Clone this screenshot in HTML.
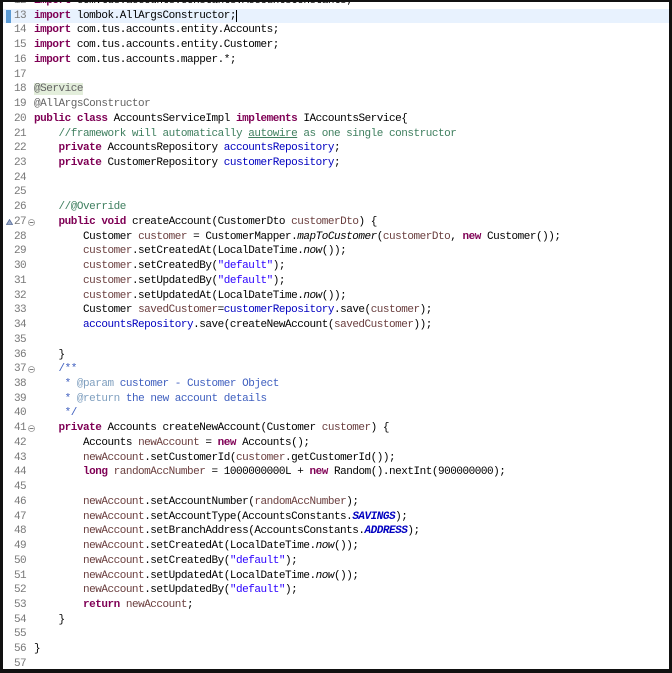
<!DOCTYPE html>
<html><head><meta charset="utf-8">
<style>
html,body{margin:0;padding:0;background:#fff;}
body{width:672px;height:673px;position:relative;overflow:hidden;}
.frame{position:absolute;left:0;top:0;width:666px;height:667px;border-left:3px solid #111;border-top:2px solid #111;border-right:3px solid #111;border-bottom:4px solid #111;overflow:hidden;background:#fff;}
.code{position:absolute;left:0;top:0;width:100%;font-family:"Liberation Mono",monospace;font-size:11px;letter-spacing:-0.48px;}
.l{position:absolute;left:0;width:100%;height:14.73px;line-height:14.73px;white-space:pre;}
.n{position:absolute;left:11px;color:#787878;width:20px;letter-spacing:-0.6px;}
.t{position:absolute;left:31px;color:#000;}
.hl{background:#e8f2fe;}
.k{color:#7f0055;font-weight:bold;}
.f{color:#0000c0;}
.s{color:#2a00ff;}
.c{color:#3f7f5f;}
.a{color:#646464;}
.j{color:#3f5fbf;}
.jt{color:#7f9fbf;}
.v{color:#6a3e3e;}
.i{font-style:italic;}
.fi{color:#0000c0;font-style:italic;font-weight:bold;}
.fold{position:absolute;left:25px;top:4px;}
</style></head><body>
<div class="frame"><div class="code" id="c">
<div class="l"><span class="n">12</span><span class="t"><span class="k">import</span> com.tus.accounts.constants.AccountsConstants;</span></div>
<div class="l hl"><span style="position:absolute;left:3px;top:1px;width:5px;height:13px;background:#5b9bd5"></span><span class="n">13</span><span class="t"><span class="k">import</span> lombok.AllArgsConstructor;<span style="border-left:1px solid #000"> </span></span></div>
<div class="l"><span class="n">14</span><span class="t"><span class="k">import</span> com.tus.accounts.entity.Accounts;</span></div>
<div class="l"><span class="n">15</span><span class="t"><span class="k">import</span> com.tus.accounts.entity.Customer;</span></div>
<div class="l"><span class="n">16</span><span class="t"><span class="k">import</span> com.tus.accounts.mapper.*;</span></div>
<div class="l"><span class="n">17</span></div>
<div class="l"><span class="n">18</span><span class="t"><span class="a" style="background:#e3eedb">@Service</span></span></div>
<div class="l"><span class="n">19</span><span class="t"><span class="a">@AllArgsConstructor</span></span></div>
<div class="l"><span class="n">20</span><span class="t"><span class="k">public</span> <span class="k">class</span> AccountsServiceImpl <span class="k">implements</span> IAccountsService{</span></div>
<div class="l"><span class="n">21</span><span class="t">    <span class="c">//framework will automatically <u>autowire</u> as one single constructor</span></span></div>
<div class="l"><span class="n">22</span><span class="t">    <span class="k">private</span> AccountsRepository <span class="f">accountsRepository</span>;</span></div>
<div class="l"><span class="n">23</span><span class="t">    <span class="k">private</span> CustomerRepository <span class="f">customerRepository</span>;</span></div>
<div class="l"><span class="n">24</span></div>
<div class="l"><span class="n">25</span></div>
<div class="l"><span class="n">26</span><span class="t">    <span class="c">//@Override</span></span></div>
<div class="l"><svg style="position:absolute;left:3px;top:4px" width="7" height="6"><path d="M0.5 5.5 L3.5 0.5 L6.5 5.5 Z" fill="#9aa9c8" stroke="#5a6f9a" stroke-width="0.8"/></svg><span class="n">27</span><svg class="fold" width="7" height="7"><circle cx="3.5" cy="3.5" r="3" fill="#fff" stroke="#999" stroke-width="0.8"/><path d="M1.5 3.5H5.5" stroke="#777"/></svg><span class="t">    <span class="k">public</span> <span class="k">void</span> createAccount(CustomerDto <span class="v">customerDto</span>) {</span></div>
<div class="l"><span class="n">28</span><span class="t">        Customer <span class="v">customer</span> = CustomerMapper.<span class="i">mapToCustomer</span>(<span class="v">customerDto</span>, <span class="k">new</span> Customer());</span></div>
<div class="l"><span class="n">29</span><span class="t">        <span class="v">customer</span>.setCreatedAt(LocalDateTime.<span class="i">now</span>());</span></div>
<div class="l"><span class="n">30</span><span class="t">        <span class="v">customer</span>.setCreatedBy(<span class="s">"default"</span>);</span></div>
<div class="l"><span class="n">31</span><span class="t">        <span class="v">customer</span>.setUpdatedBy(<span class="s">"default"</span>);</span></div>
<div class="l"><span class="n">32</span><span class="t">        <span class="v">customer</span>.setUpdatedAt(LocalDateTime.<span class="i">now</span>());</span></div>
<div class="l"><span class="n">33</span><span class="t">        Customer <span class="v">savedCustomer</span>=<span class="f">customerRepository</span>.save(<span class="v">customer</span>);</span></div>
<div class="l"><span class="n">34</span><span class="t">        <span class="f">accountsRepository</span>.save(createNewAccount(<span class="v">savedCustomer</span>));</span></div>
<div class="l"><span class="n">35</span></div>
<div class="l"><span class="n">36</span><span class="t">    }</span></div>
<div class="l"><span class="n">37</span><svg class="fold" width="7" height="7"><circle cx="3.5" cy="3.5" r="3" fill="#fff" stroke="#999" stroke-width="0.8"/><path d="M1.5 3.5H5.5" stroke="#777"/></svg><span class="t">    <span class="j">/**</span></span></div>
<div class="l"><span class="n">38</span><span class="t">     <span class="j">* <span class="jt">@param</span> customer - Customer Object</span></span></div>
<div class="l"><span class="n">39</span><span class="t">     <span class="j">* <span class="jt">@return</span> the new account details</span></span></div>
<div class="l"><span class="n">40</span><span class="t">     <span class="j">*/</span></span></div>
<div class="l"><span class="n">41</span><svg class="fold" width="7" height="7"><circle cx="3.5" cy="3.5" r="3" fill="#fff" stroke="#999" stroke-width="0.8"/><path d="M1.5 3.5H5.5" stroke="#777"/></svg><span class="t">    <span class="k">private</span> Accounts createNewAccount(Customer <span class="v">customer</span>) {</span></div>
<div class="l"><span class="n">42</span><span class="t">        Accounts <span class="v">newAccount</span> = <span class="k">new</span> Accounts();</span></div>
<div class="l"><span class="n">43</span><span class="t">        <span class="v">newAccount</span>.setCustomerId(<span class="v">customer</span>.getCustomerId());</span></div>
<div class="l"><span class="n">44</span><span class="t">        <span class="k">long</span> <span class="v">randomAccNumber</span> = 1000000000L + <span class="k">new</span> Random().nextInt(900000000);</span></div>
<div class="l"><span class="n">45</span></div>
<div class="l"><span class="n">46</span><span class="t">        <span class="v">newAccount</span>.setAccountNumber(<span class="v">randomAccNumber</span>);</span></div>
<div class="l"><span class="n">47</span><span class="t">        <span class="v">newAccount</span>.setAccountType(AccountsConstants.<span class="fi">SAVINGS</span>);</span></div>
<div class="l"><span class="n">48</span><span class="t">        <span class="v">newAccount</span>.setBranchAddress(AccountsConstants.<span class="fi">ADDRESS</span>);</span></div>
<div class="l"><span class="n">49</span><span class="t">        <span class="v">newAccount</span>.setCreatedAt(LocalDateTime.<span class="i">now</span>());</span></div>
<div class="l"><span class="n">50</span><span class="t">        <span class="v">newAccount</span>.setCreatedBy(<span class="s">"default"</span>);</span></div>
<div class="l"><span class="n">51</span><span class="t">        <span class="v">newAccount</span>.setUpdatedAt(LocalDateTime.<span class="i">now</span>());</span></div>
<div class="l"><span class="n">52</span><span class="t">        <span class="v">newAccount</span>.setUpdatedBy(<span class="s">"default"</span>);</span></div>
<div class="l"><span class="n">53</span><span class="t">        <span class="k">return</span> <span class="v">newAccount</span>;</span></div>
<div class="l"><span class="n">54</span><span class="t">    }</span></div>
<div class="l"><span class="n">55</span></div>
<div class="l"><span class="n">56</span><span class="t">}</span></div>
<div class="l"><span class="n">57</span></div>
</div></div>
<style>
.code .l:nth-child(1){top:-8.1px}.code .l:nth-child(2){top:6.6px}.code .l:nth-child(3){top:21.3px}.code .l:nth-child(4){top:36.1px}.code .l:nth-child(5){top:50.8px}.code .l:nth-child(6){top:65.5px}.code .l:nth-child(7){top:80.3px}.code .l:nth-child(8){top:95.0px}.code .l:nth-child(9){top:109.7px}.code .l:nth-child(10){top:124.5px}.code .l:nth-child(11){top:139.2px}.code .l:nth-child(12){top:153.9px}.code .l:nth-child(13){top:168.7px}.code .l:nth-child(14){top:183.4px}.code .l:nth-child(15){top:198.1px}.code .l:nth-child(16){top:212.9px}.code .l:nth-child(17){top:227.6px}.code .l:nth-child(18){top:242.3px}.code .l:nth-child(19){top:257.1px}.code .l:nth-child(20){top:271.8px}.code .l:nth-child(21){top:286.5px}.code .l:nth-child(22){top:301.3px}.code .l:nth-child(23){top:316.0px}.code .l:nth-child(24){top:330.7px}.code .l:nth-child(25){top:345.5px}.code .l:nth-child(26){top:360.2px}.code .l:nth-child(27){top:374.9px}.code .l:nth-child(28){top:389.7px}.code .l:nth-child(29){top:404.4px}.code .l:nth-child(30){top:419.1px}.code .l:nth-child(31){top:433.9px}.code .l:nth-child(32){top:448.6px}.code .l:nth-child(33){top:463.3px}.code .l:nth-child(34){top:478.1px}.code .l:nth-child(35){top:492.8px}.code .l:nth-child(36){top:507.5px}.code .l:nth-child(37){top:522.3px}.code .l:nth-child(38){top:537.0px}.code .l:nth-child(39){top:551.7px}.code .l:nth-child(40){top:566.5px}.code .l:nth-child(41){top:581.2px}.code .l:nth-child(42){top:595.9px}.code .l:nth-child(43){top:610.7px}.code .l:nth-child(44){top:625.4px}.code .l:nth-child(45){top:640.1px}.code .l:nth-child(46){top:654.9px}
</style>
</body></html>
